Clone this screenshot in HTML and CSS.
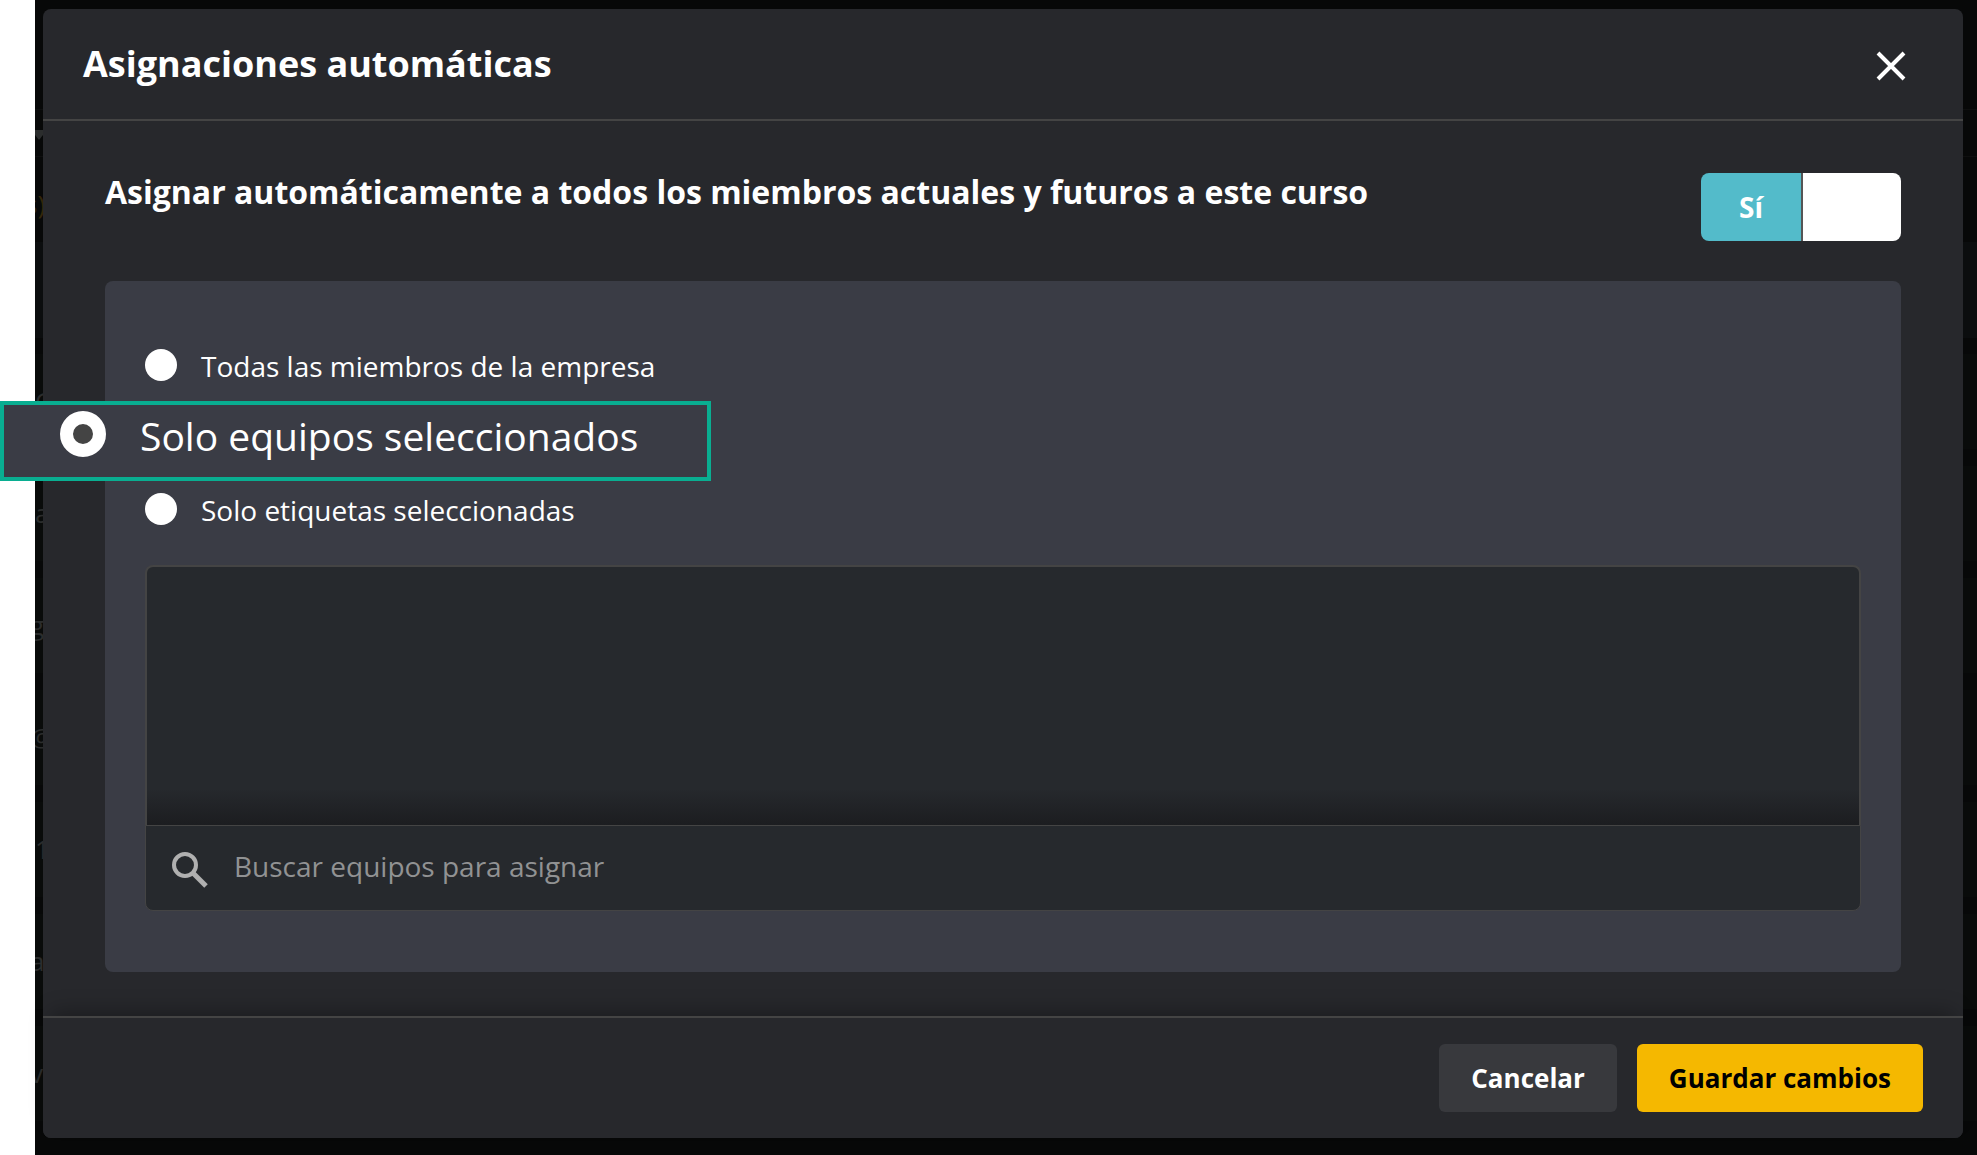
FILE: index.html
```html
<!DOCTYPE html>
<html lang="es">
<head>
    <meta charset="UTF-8">
    <meta name="viewport" content="width=device-width, initial-scale=1.0">
    <title>Asignaciones automáticas</title>
    <link rel="stylesheet" href="styles.css">
</head>
<body>
    <div class="screen">
        <!-- dimmed page behind the dialog -->
        <div class="behind" aria-hidden="true">
            <div class="behind-bar"><svg class="behind-arrow" width="12" height="10" viewBox="0 0 12 10"><path d="M0 0h8v5L4 10 0 5z" fill="#2b2d2d"/></svg></div>
            <div class="behind-link">s)</div>
            <div class="behind-band"></div>
            <div class="behind-list">
                <div class="behind-row">C</div>
                <div class="behind-row">a</div>
                <div class="behind-row shifted">g</div>
                <div class="behind-row shifted">@</div>
                <div class="behind-row">1</div>
                <div class="behind-row shifted">a</div>
                <div class="behind-row shifted">ve</div>
            </div>
        </div>

        <form class="modal" role="dialog" aria-labelledby="modalTitle">
            <div class="modal-header">
                <h1 class="modal-title" id="modalTitle">Asignaciones automáticas</h1>
                <button class="close" type="button" aria-label="Cerrar">
                    <svg width="32" height="32" viewBox="0 0 32 32"><path d="M3 3l26 26M29 3L3 29" stroke="#fff" stroke-width="4"/></svg>
                </button>
            </div>

            <div class="modal-body">
                <div class="assign">
                    <h2 class="assign-title">Asignar automáticamente a todos los miembros actuales y futuros a este curso</h2>
                    <label class="switch">
                        <input class="switch-input" type="checkbox" checked>
                        <span class="switch-on">Sí</span>
                        <span class="switch-off"></span>
                    </label>
                </div>

                <div class="panel">
                    <div class="options">
                        <label class="option">
                            <input class="radio" type="radio" name="scope">
                            <span class="option-text">Todas las miembros de la empresa</span>
                        </label>
                        <div class="option">
                            <label class="callout">
                                <input class="radio" type="radio" name="scope" checked>
                                <span class="option-text">Solo equipos seleccionados</span>
                            </label>
                        </div>
                        <label class="option">
                            <input class="radio" type="radio" name="scope">
                            <span class="option-text">Solo etiquetas seleccionadas</span>
                        </label>
                    </div>

                    <div class="teams"></div>
                    <label class="search">
                        <svg width="36" height="36" viewBox="0 0 36 36" fill="none" stroke="#b0b0b0"><circle cx="13" cy="13" r="11" stroke-width="4"/><path d="M21 21l13 13" stroke-width="5"/></svg>
                        <input class="search-input" type="text" placeholder="Buscar equipos para asignar">
                    </label>
                </div>
            </div>

            <div class="modal-footer">
                <button class="button cancel" type="button">Cancelar</button>
                <button class="button save" type="submit">Guardar cambios</button>
            </div>
        </form>
    </div>
</body>
</html>
```

FILE: styles.css
```css
* {
    box-sizing: border-box;
}
body {
    margin: 0;
    padding-left: 35px;
    background: #fff;
    color: #fff;
    font-family: "Open Sans", sans-serif;
    font-size: 28px;
}
.screen {
    position: relative;
    display: flex;
    min-height: 100vh;
    padding: 9px 14px 17px 8px;
    background: #070808;
}

/* page behind */
.behind {
    position: absolute;
    inset: 0;
    overflow: hidden;
    color: #2b2d2d;
    font-size: 26px;
}
.behind-bar {
    height: 48px;
    margin-top: 109px;
    padding-top: 20px;
    border: solid #0e0f0f;
    border-width: 1px 0;
    line-height: 0;
}
.behind-link {
    height: 85px;
    padding-top: 28px;
    color: #33270a;
    line-height: 38px;
    text-indent: -10px;
}
.behind-band {
    height: 96px;
    background: #0b0d0e;
}
.behind-list {
    display: flex;
    flex-direction: column;
    gap: 17px;
    margin-top: 16px;
}
.behind-row {
    flex-shrink: 0;
    height: 95px;
    background: #090b0a;
    line-height: 94px;
}
.shifted {
    text-indent: -5px;
}

/* dialog */
.modal {
    position: relative;
    flex: 1;
    display: flex;
    flex-direction: column;
    border-radius: 8px;
    background: #27282c;
}
.modal-header {
    display: flex;
    justify-content: space-between;
    align-items: center;
    height: 112px;
    padding: 0 56px 0 40px;
    border-bottom: 2px solid #444;
}
.modal-title {
    margin: 0;
    font-size: 36px;
    line-height: 48px;
}
.close {
    display: flex;
    padding: 4px 0 0;
    border: none;
    background: none;
    cursor: pointer;
}
.modal-body {
    flex: 1;
    padding: 52px 62px 44px;
}
.assign {
    display: flex;
    justify-content: space-between;
    gap: 40px;
    margin-bottom: 40px;
}
.assign-title {
    margin: 0;
    font-size: 32px;
    line-height: 38px;
}
.switch {
    position: relative;
    display: flex;
    flex-shrink: 0;
    width: 200px;
    height: 68px;
    border-radius: 8px;
    overflow: hidden;
    font-weight: bold;
    cursor: pointer;
}
.switch-input {
    position: absolute;
    opacity: 0;
}
.switch-on {
    width: 102px;
    border-right: 2px solid #555;
    background: #53bbca;
    line-height: 68px;
    text-align: center;
}
.switch-off {
    flex: 1;
    background: #fff;
}
.panel {
    padding: 68px 40px 61px;
    border-radius: 8px;
    background: #3a3c45;
}
.options {
    display: flex;
    flex-direction: column;
    gap: 40px;
    margin-bottom: 40px;
}
.option {
    position: relative;
    display: flex;
    align-items: center;
    gap: 24px;
    height: 32px;
}
.option-text {
    padding-top: 2px;
}
.radio {
    appearance: none;
    flex-shrink: 0;
    width: 32px;
    height: 32px;
    margin: 0;
    border-radius: 50%;
    background: #fff;
}

/* enlarged option on top of the dialog */
.callout {
    position: absolute;
    top: -20px;
    left: -145px;
    z-index: 1;
    display: flex;
    align-items: center;
    gap: 34px;
    width: 711px;
    height: 80px;
    padding: 0 0 14px 56px;
    border: 4px solid #09ae91;
    background: #3a3c45;
    font-size: 39px;
}
.callout .radio {
    width: 46px;
    height: 46px;
    border: 13px solid #fff;
    background: #444;
}
.teams {
    height: 260px;
    border: 2px solid #444;
    border-bottom: none;
    border-radius: 8px 8px 0 0;
    background: linear-gradient(#26292d 86%, #1c1d20);
}
.search {
    display: flex;
    align-items: center;
    gap: 26px;
    height: 86px;
    padding: 4px 26px 0;
    border: 1px solid #444;
    border-radius: 0 0 8px 8px;
    background: #26292d;
}
.search-input {
    flex: 1;
    height: 44px;
    padding: 0 0 8px;
    border: none;
    outline: none;
    background: none;
    color: #fff;
    font: inherit;
}
.search-input::placeholder {
    color: #919293;
}
.modal-footer {
    display: flex;
    justify-content: flex-end;
    gap: 20px;
    padding: 26px 40px;
    border-top: 2px solid #444;
    border-radius: 0 0 8px 8px;
    background: #27282c;
    box-shadow: 0 -12px 20px -8px rgba(0, 0, 0, 0.3);
}
.button {
    height: 68px;
    padding: 0 32px;
    border: none;
    border-radius: 6px;
    font-family: inherit;
    font-size: 26px;
    font-weight: bold;
    cursor: pointer;
}
.cancel {
    background: #38393d;
    color: #fff;
}
.save {
    background: #f5b800;
    color: #000;
}
```
